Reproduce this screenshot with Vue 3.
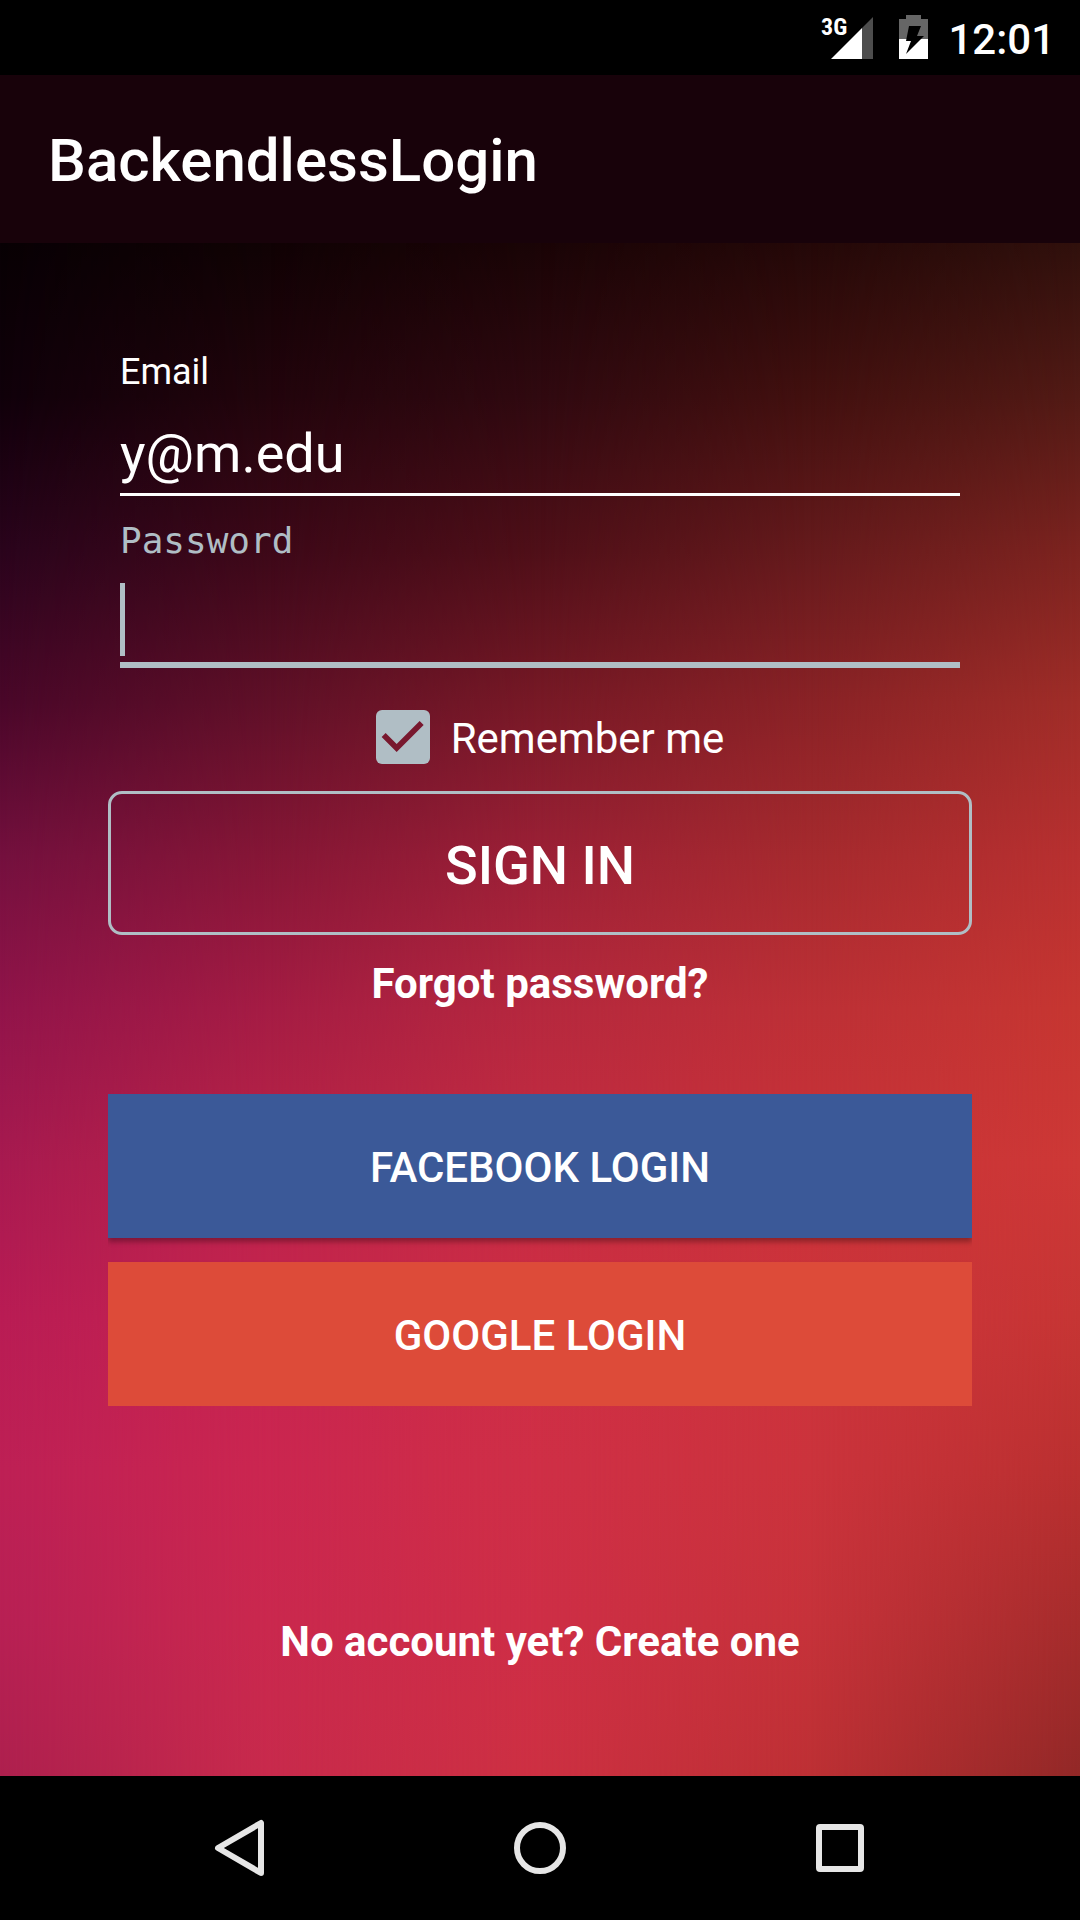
<script setup>
import { ref } from 'vue'

const email = ref('y@m.edu')
const password = ref('')
const remember = ref(true)
</script>

<template>
  <div class="screen">
    <div class="status">
      <svg class="signal" width="54" height="46" viewBox="0 0 54 46" role="img" aria-label="Signal">
        <path d="M10 45 41 14V45Z" fill="#fff" />
        <path d="M41 14 52 3V45H41Z" fill="#4d4d4d" />
        <text x="0" y="21" class="network">3G</text>
      </svg>
      <svg class="battery" width="29" height="44" viewBox="0 0 29 44" role="img" aria-label="Battery charging">
        <path d="M7 0H22V4H29V24H0V4H7Z" fill="#666" />
        <path d="M0 24H29V44H0Z" fill="#fff" />
        <path d="M10 11H22L18 21H25L7 39 12 26H7Z" fill="#000" />
      </svg>
      <time class="clock">12:01</time>
    </div>

    <header class="appbar">
      <h1>BackendlessLogin</h1>
    </header>

    <main class="content">
      <div class="backdrop" aria-hidden="true">
        <i class="c0"></i><i class="c1"></i><i class="c2"></i><i class="c3"></i><i class="c4"></i>
      </div>

      <form class="form" @submit.prevent>
        <div class="field">
          <label for="email">Email</label>
          <input id="email" v-model="email" type="email" />
        </div>
        <div class="field active">
          <label for="password">Password</label>
          <input id="password" v-model="password" type="password" />
          <span class="caret"></span>
        </div>

        <label class="remember">
          <input v-model="remember" type="checkbox" />
          <span>Remember me</span>
        </label>

        <button class="signin" type="submit">SIGN IN</button>
        <a class="link" href="#forgot">Forgot password?</a>

        <div class="social">
          <button class="facebook" type="button">FACEBOOK LOGIN</button>
          <button class="google" type="button">GOOGLE LOGIN</button>
        </div>

        <a class="link create" href="#register">No account yet? Create one</a>
      </form>
    </main>

    <nav class="navbar">
      <button type="button" aria-label="Back">
        <svg width="60" height="60" viewBox="0 0 60 60"><path d="M51 5V55L8 30Z" /></svg>
      </button>
      <button type="button" aria-label="Home">
        <svg width="60" height="60" viewBox="0 0 60 60"><circle cx="30" cy="30" r="23" /></svg>
      </button>
      <button type="button" aria-label="Recent apps">
        <svg width="60" height="60" viewBox="0 0 60 60"><rect x="9" y="9" width="42" height="42" rx="1" /></svg>
      </button>
    </nav>
  </div>
</template>

<style>
body {
  margin: 0;
  background: #000;
}
</style>

<style scoped>
.screen {
  display: flex;
  flex-direction: column;
  min-height: 100vh;
  color: #fff;
  font-family: Roboto, "Liberation Sans", sans-serif;
}

.status {
  box-sizing: border-box;
  display: flex;
  align-items: center;
  justify-content: flex-end;
  height: 75px;
  padding: 0 25px 2px 0;
  background: #000;
}
.network {
  fill: #fff;
  font-family: "Roboto Condensed", Roboto, sans-serif;
  font-size: 24px;
  font-weight: 700;
}
.battery {
  margin: 0 20px 0 24px;
}
.clock {
  font-size: 42px;
  font-weight: 500;
  line-height: 48px;
  padding-top: 6px;
}

.appbar {
  display: flex;
  align-items: center;
  height: 168px;
  padding: 0 48px;
  background: #18020a;
}
h1 {
  margin: 0;
  padding-top: 4px;
  font-size: 60px;
  font-weight: 500;
  line-height: 72px;
}

.content {
  position: relative;
  flex: 1;
  padding: 105px 10% 110px;
}

/* Each layer holds one column of colours and fades in from the column before it. */
.backdrop,
.backdrop i {
  position: absolute;
  inset: 0;
}
.c0 {
  background: linear-gradient(#080004, #10000a, #2a041c, #4a0729, #74103e, #92144a, #a81a50, #b91c54, #be2055, #b82054, #ae204e);
}
.c1 {
  background: linear-gradient(#100204, #22040c, #3d0818, #601028, #861636, #a51c44, #bb2448, #c62450, #cb2650, #ca284e, #c82a4c);
  mask-image: linear-gradient(to right, transparent 0%, #000 25%);
}
.c2 {
  background: linear-gradient(#1a0406, #300910, #4f0f18, #781926, #9c2036, #b6283e, #c42c42, #ce2e44, #cf2f46, #ce2e46, #cd3042);
  mask-image: linear-gradient(to right, transparent 25%, #000 50%);
}
.c3 {
  background: linear-gradient(#240808, #42100f, #651a1c, #8a2226, #a62a2e, #bd3036, #c93238, #cd343c, #cb333c, #c6323a, #bd3034);
  mask-image: linear-gradient(to right, transparent 50%, #000 75%);
}
.c4 {
  background: linear-gradient(#30100c, #521a15, #7c231f, #a02d28, #b83030, #c63631, #cd3836, #c63534, #ba3030, #a62c2c, #922827);
  mask-image: linear-gradient(to right, transparent 75%, #000 100%);
}

.form {
  position: relative;
  display: flex;
  flex-direction: column;
}

.field {
  position: relative;
  display: flex;
  flex-direction: column;
  gap: 22px;
  margin: 0 12px 21px;
}
.field label {
  font-size: 36px;
  line-height: 48px;
}
.field input {
  box-sizing: border-box;
  width: 100%;
  height: 78px;
  padding: 0 0 5px;
  border: 0;
  border-bottom: 3px solid #fff;
  border-radius: 0;
  outline: 0;
  background: none;
  color: #fff;
  font: 54px/70px Roboto, "Liberation Sans", sans-serif;
}
.active label {
  color: #b0bec5;
  font-family: "DejaVu Sans Mono", monospace;
}
.active input {
  height: 81px;
  border-bottom: 6px solid #b0bec5;
}
.caret {
  position: absolute;
  bottom: 12px;
  left: 0;
  width: 5px;
  height: 73px;
  background: #b0bec5;
}

.remember {
  display: flex;
  align-items: center;
  justify-content: center;
  gap: 21px;
  margin: 21px 0 27px 20px;
  font-size: 42px;
  line-height: 48px;
}
.remember span {
  padding-top: 4px;
}
.remember input {
  appearance: none;
  width: 54px;
  height: 54px;
  margin: 0;
  border-radius: 6px;
  background: #b0bec5;
}
.remember input:checked::after {
  content: "";
  display: block;
  height: 54px;
  background: #78182e;
  clip-path: polygon(6px 27px, 10px 23px, 21px 34px, 44px 11px, 48px 15px, 21px 42px);
}

.signin,
.social button {
  height: 144px;
  padding: 4px 0 0;
  border: 0;
  color: #fff;
  font: 500 42px/48px Roboto, "Liberation Sans", sans-serif;
}
.signin {
  padding-top: 6px;
  border: 3px solid #b0bec5;
  border-radius: 14px;
  background: none;
  font-size: 54px;
}

.link {
  align-self: center;
  margin-top: 25px;
  color: #fff;
  font-size: 42px;
  font-weight: 700;
  line-height: 48px;
  text-decoration: none;
}

.social {
  display: flex;
  flex-direction: column;
  gap: 24px;
  margin-top: 86px;
  overflow: hidden;
}
.social button {
  box-shadow: 0 4px 5px rgba(0, 0, 0, 0.3);
}
.social .facebook {
  background: #3b5998;
}
.social .google {
  background: #dd4b39;
}
.create {
  margin-top: 212px;
}

.navbar {
  display: flex;
  justify-content: center;
  gap: 240px;
  height: 144px;
  background: #000;
}
.navbar button {
  width: 60px;
  padding: 0;
  border: 0;
  background: none;
}
.navbar svg {
  display: block;
  fill: none;
  stroke: #e6e6e6;
  stroke-width: 6px;
  stroke-linejoin: round;
}
</style>
